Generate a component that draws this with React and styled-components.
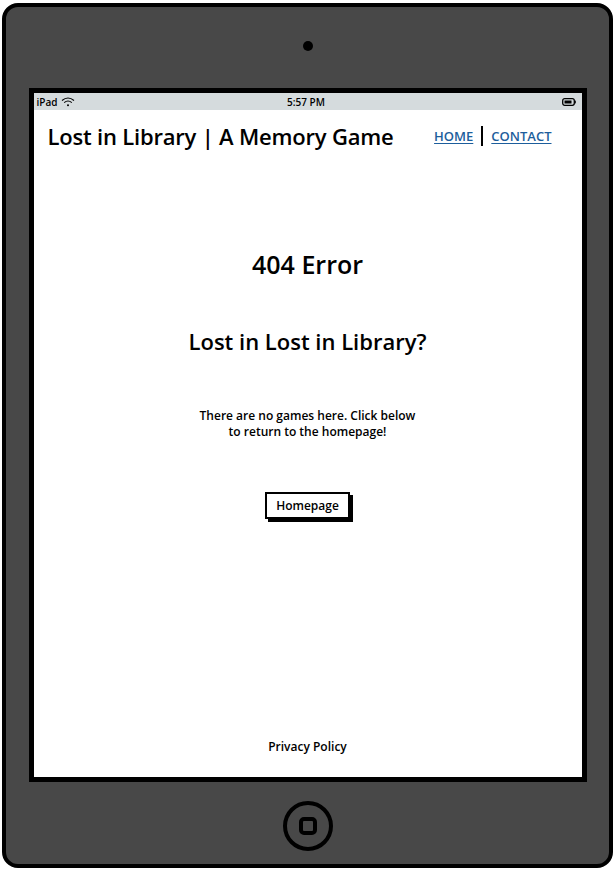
import React from "react";
import styled, { createGlobalStyle } from "styled-components";

const GlobalStyle = createGlobalStyle`
  html, body {
    margin: 0;
    padding: 0;
    background: #ffffff;
  }
  body {
    font-family: "Open Sans", "Liberation Sans", sans-serif;
    color: #000;
  }
`;

const Device = styled.div`
  box-sizing: border-box;
  width: 611px;
  height: 865px;
  margin: 3px 0 0 2px;
  border: 4px solid #000;
  border-radius: 16px;
  background: #484848;
  display: flex;
  flex-direction: column;
  align-items: center;
`;

const Camera = styled.div`
  width: 10px;
  height: 10px;
  border-radius: 50%;
  background: #000;
  margin-top: 34px;
  margin-bottom: 37px;
`;

const ScreenFrame = styled.div`
  box-sizing: border-box;
  width: 558px;
  height: 694px;
  border: 5px solid #000;
  background: #fff;
  display: flex;
  flex-direction: column;
`;

const StatusBar = styled.div`
  height: 17px;
  background: #d5dbdd;
  display: grid;
  grid-template-columns: 1fr auto 1fr;
  align-items: center;
  padding: 0 6px 0 3px;
  font-size: 10px;
  font-weight: 600;
`;

const StatusLeft = styled.div`
  display: flex;
  align-items: center;
  gap: 4px;
`;

const StatusRight = styled.div`
  display: flex;
  justify-content: flex-end;
`;

const Header = styled.header`
  display: flex;
  justify-content: space-between;
  align-items: center;
  padding: 11px 30px 0 14px;
`;

const Title = styled.h1`
  margin: 0;
  font-size: 22px;
  font-weight: 600;
  letter-spacing: -0.2px;
`;

const Nav = styled.nav`
  display: flex;
  align-items: center;
`;

const NavLink = styled.a`
  color: #1d5e9c;
  font-size: 13px;
  font-weight: 600;
  text-decoration: underline;
  text-underline-offset: 2px;
`;

const Divider = styled.span`
  width: 2px;
  height: 20px;
  background: #000;
  margin: 0 8px 0 8px;
`;

const Main = styled.main`
  flex: 1;
  display: flex;
  flex-direction: column;
  align-items: center;
  text-align: center;
  padding-top: 96px;
`;

const ErrorCode = styled.h2`
  margin: 0;
  font-size: 25px;
  font-weight: 600;
`;

const SubTitle = styled.h3`
  margin: 45px 0 0;
  font-size: 22px;
  font-weight: 600;
`;

const Message = styled.p`
  margin: 52px 0 0;
  font-size: 12px;
  font-weight: 600;
  line-height: 16px;
  width: 230px;
`;

const HomeButton = styled.button`
  margin-top: 52px;
  font-family: inherit;
  font-size: 12px;
  font-weight: 600;
  color: #000;
  background: #fff;
  border: 2px solid #000;
  padding: 3px 9px;
  box-shadow: 3px 3px 0 #000;
  cursor: pointer;
`;

const Footer = styled.footer`
  text-align: center;
  font-size: 12px;
  font-weight: 600;
  padding-bottom: 22px;
`;

const HomeArea = styled.div`
  margin-top: 19px;
  width: 50px;
  height: 50px;
  box-sizing: border-box;
  border: 4px solid #000;
  border-radius: 50%;
  display: flex;
  align-items: center;
  justify-content: center;
`;

const HomeSquare = styled.div`
  width: 18px;
  height: 18px;
  box-sizing: border-box;
  border: 4px solid #000;
  border-radius: 5px;
`;

const Wifi = () => (
  <svg width="14" height="10" viewBox="0 0 14 10" fill="none" stroke="#000" strokeWidth="1.2">
    <path d="M1 3.5 Q7 -1.5 13 3.5" />
    <path d="M3.2 5.6 Q7 2.4 10.8 5.6" />
    <circle cx="7" cy="8.3" r="1" fill="#000" stroke="none" />
  </svg>
);

const Battery = () => (
  <svg width="14" height="8" viewBox="0 0 14 8">
    <rect x="0.7" y="0.7" width="11.6" height="6.6" rx="2" fill="none" stroke="#000" strokeWidth="1.3" />
    <rect x="2.5" y="2.5" width="7" height="3" fill="#000" />
    <rect x="12.6" y="2.6" width="1.2" height="2.8" fill="#000" />
  </svg>
);

export default function App() {
  return (
    <>
      <GlobalStyle />
      <Device>
        <Camera />
        <ScreenFrame>
          <StatusBar>
            <StatusLeft>
              <span>iPad</span>
              <Wifi />
            </StatusLeft>
            <span>5:57 PM</span>
            <StatusRight>
              <Battery />
            </StatusRight>
          </StatusBar>
          <Header>
            <Title>Lost in Library | A Memory Game</Title>
            <Nav>
              <NavLink href="#">HOME</NavLink>
              <Divider />
              <NavLink href="#">CONTACT</NavLink>
            </Nav>
          </Header>
          <Main>
            <ErrorCode>404 Error</ErrorCode>
            <SubTitle>Lost in Lost in Library?</SubTitle>
            <Message>There are no games here. Click below to return to the homepage!</Message>
            <HomeButton>Homepage</HomeButton>
          </Main>
          <Footer>Privacy Policy</Footer>
        </ScreenFrame>
        <HomeArea>
          <HomeSquare />
        </HomeArea>
      </Device>
    </>
  );
}
